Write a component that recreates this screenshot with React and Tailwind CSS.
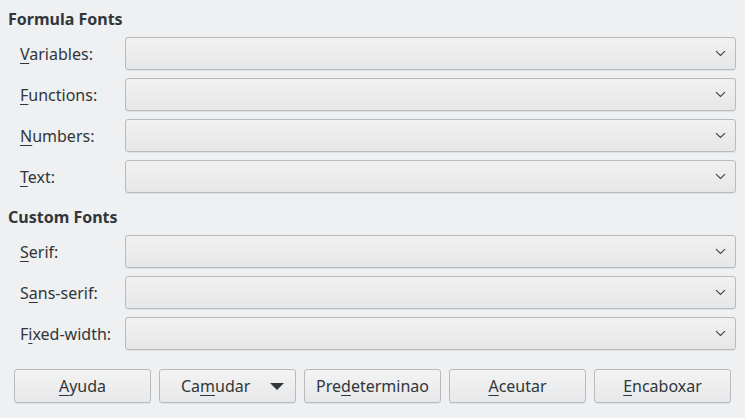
import React from "react";

const Label = ({ text, mn }) => {
  // mn = index of the mnemonic letter
  return (
    <span>
      {text.slice(0, mn)}
      <span className="underline underline-offset-[3px] decoration-1">{text[mn]}</span>
      {text.slice(mn + 1)}
    </span>
  );
};

const Chevron = () => (
  <svg width="11" height="7" viewBox="0 0 11 7" className="text-[#3b4045]">
    <path d="M1 1.2 L5.5 5.5 L10 1.2" fill="none" stroke="currentColor" strokeWidth="1.1" />
  </svg>
);

const ComboRow = ({ label, mn }) => (
  <div className="flex items-center h-[33px]">
    <div className="w-[117px] shrink-0 pl-3">
      <Label text={label} mn={mn} />
    </div>
    <div className="flex-1 h-full mr-[9px] flex items-center justify-end pr-[9px] rounded-[3px] border border-[#b9babb] bg-gradient-to-b from-[#f1f1f2] to-[#e6e7e8] shadow-[0_1px_0_rgba(0,0,0,0.06)]">
      <Chevron />
    </div>
  </div>
);

const Button = ({ label, mn, arrow }) => (
  <button className="w-[137px] h-[34px] flex items-center justify-center rounded-[3px] border border-[#b9babb] bg-gradient-to-b from-[#f3f3f4] to-[#e7e8e9] shadow-[0_1px_0_rgba(0,0,0,0.06)] text-[#31363b]">
    {arrow ? (
      <div className="flex items-center w-full pl-[21px] pr-[11px]">
        <Label text={label} mn={mn} />
        <span className="flex-1" />
        <svg width="14" height="7" viewBox="0 0 14 7">
          <path d="M0 0 L14 0 L7 7 Z" fill="#31363b" />
        </svg>
      </div>
    ) : (
      <Label text={label} mn={mn} />
    )}
  </button>
);

export default function App() {
  return (
    <div
      className="w-[745px] h-[418px] bg-[#eff0f1] text-[#31363b] text-[16px] leading-5 overflow-hidden"
      style={{ fontFamily: '"Noto Sans", "Open Sans", sans-serif' }}
    >
      <div className="pl-2 pt-[9px]">
        <h2 className="font-bold h-5">Formula Fonts</h2>
        <div className="mt-2 flex flex-col gap-2">
          <ComboRow label="Variables:" mn={0} />
          <ComboRow label="Functions:" mn={0} />
          <ComboRow label="Numbers:" mn={0} />
          <ComboRow label="Text:" mn={0} />
        </div>
        <h2 className="font-bold h-5 mt-[14px]">Custom Fonts</h2>
        <div className="mt-2 flex flex-col gap-2">
          <ComboRow label="Serif:" mn={0} />
          <ComboRow label="Sans-serif:" mn={1} />
          <ComboRow label="Fixed-width:" mn={1} />
        </div>
      </div>
      <div className="mt-[19px] pl-[14px] flex gap-2">
        <Button label="Ayuda" mn={0} />
        <Button label="Camudar" mn={2} arrow />
        <Button label="Predeterminao" mn={3} />
        <Button label="Aceutar" mn={0} />
        <Button label="Encaboxar" mn={0} />
      </div>
    </div>
  );
}
